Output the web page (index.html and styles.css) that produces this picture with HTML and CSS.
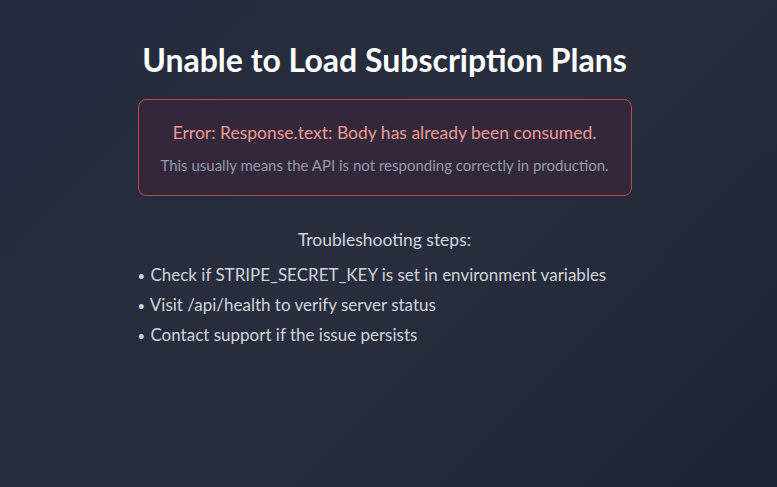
FILE: index.html
```html
<!DOCTYPE html>
<html lang="en">
<head>
<meta charset="utf-8">
<title>Unable to Load Subscription Plans</title>
<link rel="stylesheet" href="styles.css">
</head>
<body>
<main class="page">
  <section class="panel">
    <h1 class="title">Unable to Load Subscription Plans</h1>
    <div class="error-box">
      <p class="error-msg">Error: Response.text: Body has already been consumed.</p>
      <p class="error-hint">This usually means the API is not responding correctly in production.</p>
    </div>
    <div class="steps">
      <p class="steps-title">Troubleshooting steps:</p>
      <ul class="steps-list">
        <li><span class="dot">•</span> Check if STRIPE_SECRET_KEY is set in environment variables</li>
        <li><span class="dot">•</span> Visit /api/health to verify server status</li>
        <li><span class="dot">•</span> Contact support if the issue persists</li>
      </ul>
    </div>
  </section>
</main>
</body>
</html>
```
FILE: styles.css
```css
html, body {
  margin: 0;
  height: 100%;
}
body {
  background: linear-gradient(135deg, #232a3b 0%, #282e3d 50%, #1f2434 100%);
  font-family: Lato, "Noto Sans", sans-serif;
  color: #fff;
}
.page {
  min-height: 100%;
  padding: 40px 8px 0 0;
  box-sizing: border-box;
}
.panel {
  width: 494px;
  margin: 0 auto;
  display: flex;
  flex-direction: column;
}
.title {
  margin: 0 0 19px;
  text-align: center;
  font-size: 32px;
  line-height: 40px;
  font-weight: 700;
  color: #ffffff;
}
.error-box {
  border: 1px solid #b9494c;
  background: #32283a;
  border-radius: 8px;
  padding: 21px 12px 20px;
  text-align: center;
}
.error-msg {
  margin: 0 0 10px;
  font-size: 17.5px;
  line-height: 24px;
  color: #f19a94;
}
.error-hint {
  margin: 0;
  font-size: 15px;
  line-height: 20px;
  color: #949bab;
}
.steps {
  margin-top: 32px;
  color: #d1d5db;
}
.steps-title {
  margin: 0 0 11px;
  text-align: center;
  font-size: 17.5px;
  line-height: 24px;
}
.steps-list {
  list-style: none;
  margin: 0;
  padding: 0;
  display: flex;
  flex-direction: column;
  gap: 6px;
  font-size: 17px;
  line-height: 24px;
}
.steps-list li {
  height: 24px;
}
.dot {
  font-size: 13px;
  line-height: 1;
  margin-right: 1px;
}
```
